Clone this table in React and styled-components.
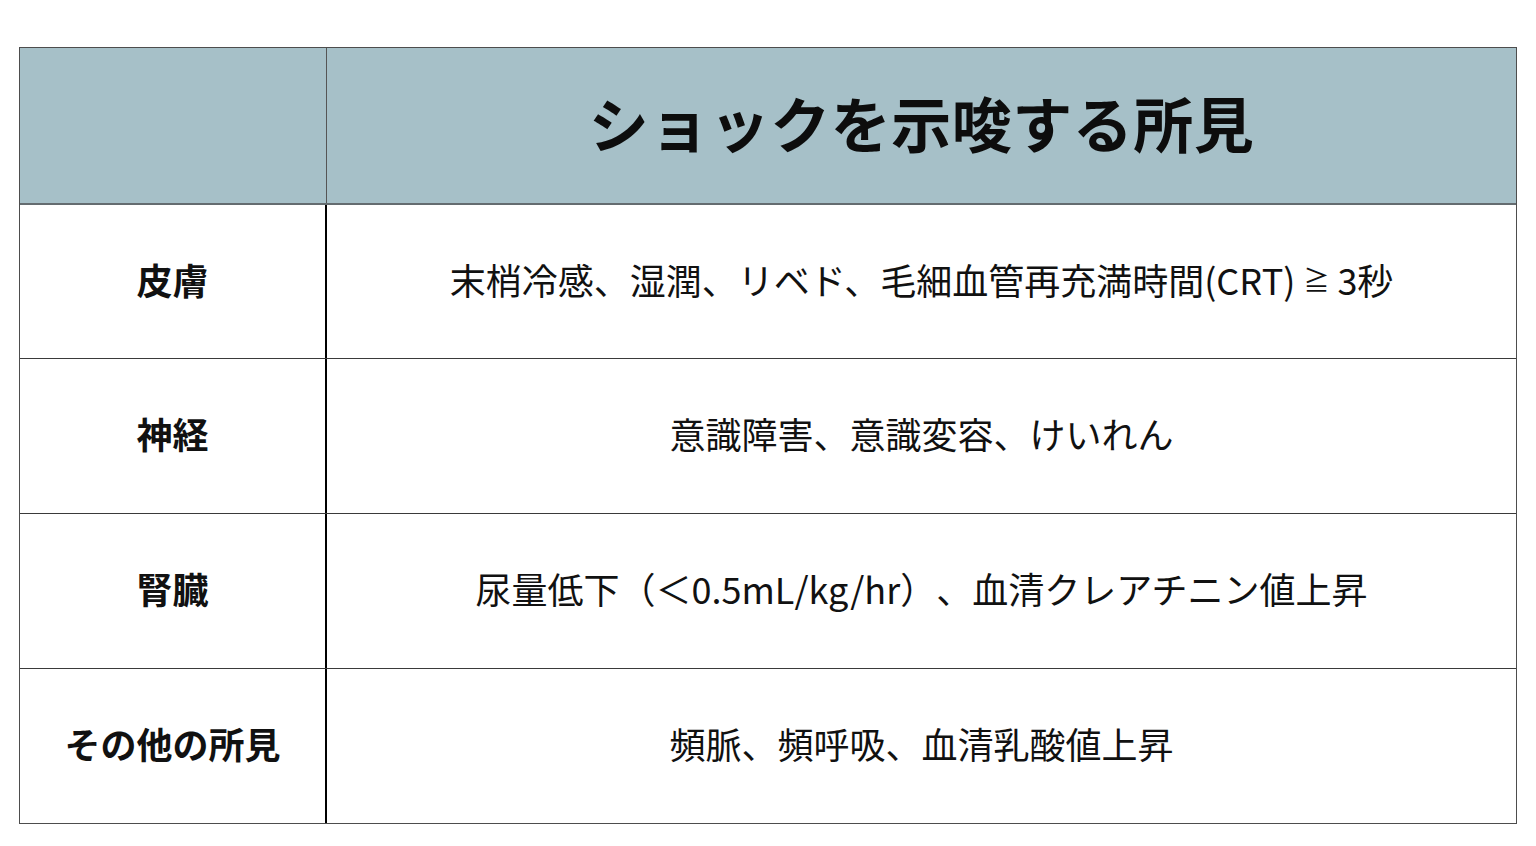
import React from "react";
import styled, { createGlobalStyle } from "styled-components";

const GlobalStyle = createGlobalStyle`
    body {
        margin: 0;
        background: #fff;
        font-family: "Noto Sans CJK JP", "Noto Sans", sans-serif;
        color: #111;
    }
`

const Page = styled.div`
    padding: 47px 19px 0 19px;
    width: 1536px;
    box-sizing: border-box;
`

const Table = styled.div`
    width: 1498px;
    border: 1px solid #4d4d4d;
    box-sizing: border-box;
`

const Row = styled.div`
    display: grid;
    grid-template-columns: 307px 1fr;
    height: 155px;
    background: ${p => p.$head ? "#a6c0c8" : "#fff"};
    border-top: ${p => p.$first ? "none" : p.$afterHead ? "2px solid #646c70" : "1px solid #3a3a3a"};
    box-sizing: border-box;
`

const Label = styled.div`
    display: flex;
    align-items: center;
    justify-content: center;
    padding-bottom: 6px;
    border-right: ${p => p.$head ? "1px solid #555" : "2px solid #000"};
    font-size: 36px;
    font-weight: 700;
    color: #111;
`

const Value = styled.div`
    display: flex;
    align-items: center;
    justify-content: center;
    padding-bottom: 6px;
    font-size: 36px;
    font-weight: 400;
    color: #111;
    white-space: nowrap;
    text-spacing-trim: space-all;
`

const SmallSign = styled.span`
    font-size: 26px;
    margin: 0 8px;
`

const Title = styled.div`
    display: flex;
    align-items: center;
    justify-content: center;
    padding-bottom: 8px;
    font-size: 60px;
    font-weight: 700;
    color: #0d0d0d;
    letter-spacing: 0.5px;
`

const rows = [
    { label: "皮膚", value: <>末梢冷感、湿潤、リベド、毛細血管再充満時間(CRT)<SmallSign>≧</SmallSign>3秒</> },
    { label: "神経", value: "意識障害、意識変容、けいれん" },
    { label: "腎臓", value: "尿量低下（＜0.5mL/kg/hr）、血清クレアチニン値上昇" },
    { label: "その他の所見", value: "頻脈、頻呼吸、血清乳酸値上昇" },
]

const App = () => {
    return (
        <>
            <GlobalStyle />
            <Page>
                <Table>
                    <Row $head $first>
                        <Label $head />
                        <Title>ショックを示唆する所見</Title>
                    </Row>
                    {
                        rows.map((item, index) => (
                            <Row key={index} $afterHead={index === 0}>
                                <Label>{item.label}</Label>
                                <Value>{item.value}</Value>
                            </Row>
                        ))
                    }
                </Table>
            </Page>
        </>
    )
}

export default App;
